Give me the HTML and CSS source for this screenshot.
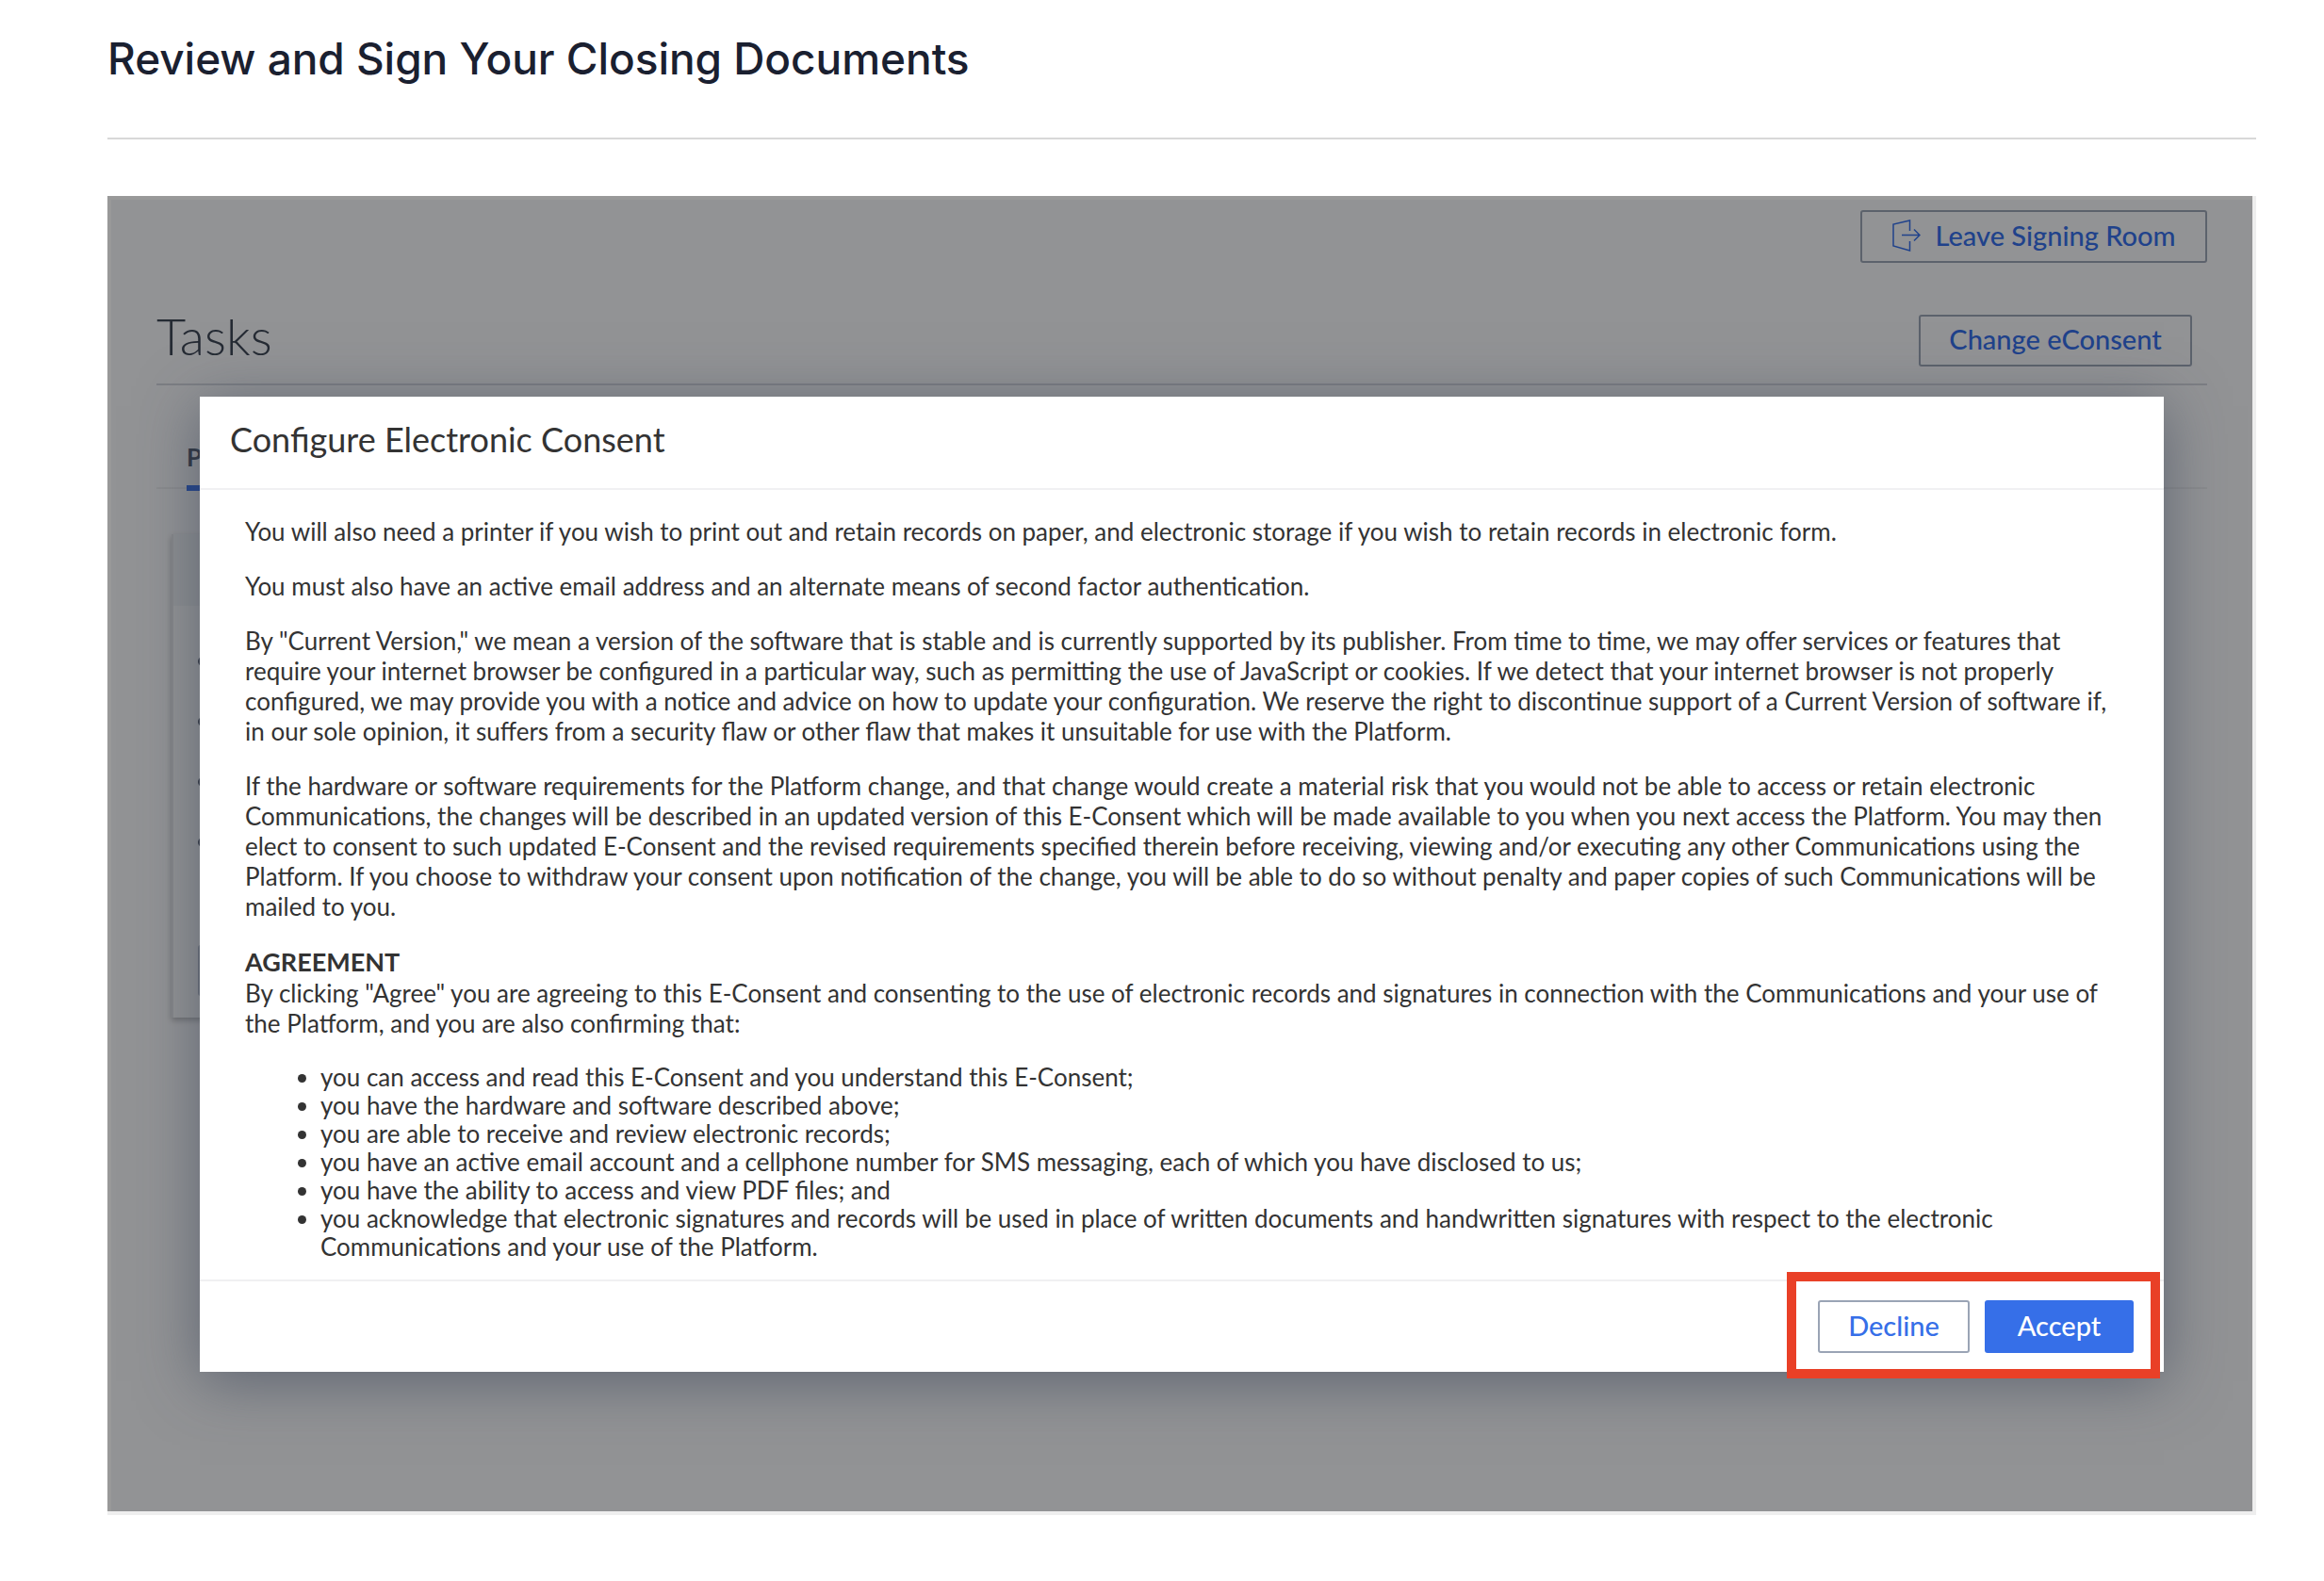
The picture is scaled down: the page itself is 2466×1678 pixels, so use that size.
FILE: index.html
```html
<!DOCTYPE html>
<html lang="en">
<head>
  <meta charset="UTF-8">
  <title>Review and Sign Your Closing Documents</title>
  <link rel="stylesheet" href="styles.css">
</head>
<body>
  <header class="page-header">
    <h1>Review and Sign Your Closing Documents</h1>
  </header>

  <div class="frame">
    <div class="room">
      <div class="room-actions">
        <a class="btn btn-outline btn-leave">
          <svg class="leave-icon" viewBox="0 0 30 34" width="30" height="34" fill="none" stroke="currentColor" stroke-width="1.5">
            <path d="M18.5 12V1L1 5v23l17.5 5V23"/>
            <path d="M10 16.5h19M23 10.500l6 6-6 6"/>
          </svg>
          Leave Signing Room
        </a>
      </div>
      <div class="tasks-head">
        <h2>Tasks</h2>
        <a class="btn btn-outline btn-econsent">Change eConsent</a>
      </div>
      <div class="tabs"><span class="tab">P</span></div>
      <div class="task-card">
        <div class="task-card-head"></div>
        <ul class="task-list">
          <li></li>
          <li></li>
          <li></li>
          <li></li>
        </ul>
        <div class="task-card-btn"></div>
      </div>
    </div>

    <div class="overlay"></div>

    <div class="modal">
      <div class="modal-head">Configure Electronic Consent</div>
      <div class="modal-body">
        <p>You will also need a printer if you wish to print out and retain records on paper, and electronic storage if you wish to retain records in electronic form.</p>
        <p>You must also have an active email address and an alternate means of second factor authentication.</p>
        <p>By "Current Version," we mean a version of the software that is stable and is currently supported by its publisher. From time to time, we may offer services or features that require your internet browser be configured in a particular way, such as permitting the use of JavaScript or cookies. If we detect that your internet browser is not properly configured, we may provide you with a notice and advice on how to update your configuration. We reserve the right to discontinue support of a Current Version of software if, in our sole opinion, it suffers from a security flaw or other flaw that makes it unsuitable for use with the Platform.</p>
        <p>If the hardware or software requirements for the Platform change, and that change would create a material risk that you would not be able to access or retain electronic Communications, the changes will be described in an updated version of this E-Consent which will be made available to you when you next access the Platform. You may then elect to consent to such updated E-Consent and the revised requirements specified therein before receiving, viewing and/or executing any other Communications using the Platform. If you choose to withdraw your consent upon notification of the change, you will be able to do so without penalty and paper copies of such Communications will be mailed to you.</p>
        <h3>AGREEMENT</h3>
        <p>By clicking "Agree" you are agreeing to this E-Consent and consenting to the use of electronic records and signatures in connection with the Communications and your use of the Platform, and you are also confirming that:</p>
        <ul>
          <li>you can access and read this E-Consent and you understand this E-Consent;</li>
          <li>you have the hardware and software described above;</li>
          <li>you are able to receive and review electronic records;</li>
          <li>you have an active email account and a cellphone number for SMS messaging, each of which you have disclosed to us;</li>
          <li>you have the ability to access and view PDF files; and</li>
          <li>you acknowledge that electronic signatures and records will be used in place of written documents and handwritten signatures with respect to the electronic Communications and your use of the Platform.</li>
        </ul>
      </div>
      <div class="modal-foot">
        <a class="btn btn-decline">Decline</a>
        <a class="btn btn-accept">Accept</a>
      </div>
    </div>

    <div class="highlight"></div>
  </div>
</body>
</html>
```

FILE: styles.css
```css
:root {
  --blue: #366fe8;
  --text: #333;
  --title: #1a2030;
}

* {
  box-sizing: border-box;
  margin: 0;
  padding: 0;
}

body {
  font-family: Lato, "Open Sans", sans-serif;
  color: var(--text);
  background-color: white;
  padding: 0 72px 0 114px;
}

.page-header {
  height: 148px;
  border-bottom: 2px solid #d8d8d8;
  padding-top: 32px;
}

h1 {
  font-family: Inter, sans-serif;
  font-size: 46px;
  line-height: 60px;
  font-weight: 500;
  letter-spacing: -0.05px;
  color: var(--title);
}

.frame {
  position: relative;
  margin-top: 60px;
  height: 1400px;
  border-right: 4px solid #eee;
  border-bottom: 4px solid #eee;
  overflow: hidden;
}

.room {
  height: 100%;
  padding: 11px 48px 0 48px;
  background-color: #f4f5f8;
  border-top: 4px solid white;
  border-left: 4px solid white;
}

.room-actions {
  display: flex;
  justify-content: flex-end;
}

.btn {
  display: flex;
  align-items: center;
  justify-content: center;
  padding-bottom: 3px;
  font-size: 29px;
  font-weight: 500;
  border-radius: 3px;
}

.btn-outline {
  height: 55px;
  border: 2px solid #9aa4b5;
  color: var(--blue);
}

.btn-leave {
  width: 368px;
  height: 56px;
  gap: 16px;
}

.leave-icon {
  flex: none;
}

.tasks-head {
  display: flex;
  justify-content: space-between;
  align-items: center;
  margin-top: 55px;
  padding: 0 16px 18px 0;
  border-bottom: 2px solid #cfd3da;
}

.btn-econsent {
  width: 290px;
  padding-bottom: 5px;
}

h2 {
  font-size: 54px;
  font-weight: 300;
  line-height: 55px;
  color: #3f4858;
  margin-top: -10px;
}

.tabs {
  height: 110px;
  padding: 60px 0 0 32px;
  border-bottom: 2px solid #e6e8eb;
}

.tab {
  display: inline-block;
  width: 40px;
  height: 52px;
  font-size: 26px;
  font-weight: 700;
  color: #4a5568;
  border-bottom: 6px solid var(--blue);
}

.task-card {
  position: relative;
  width: 1500px;
  height: 513px;
  margin: 48px 0 0 16px;
  border-left: 2px solid #dfe2e7;
  background-color: #f6f7f9;
  box-shadow: 0 3px 6px rgba(0, 0, 0, 0.25);
}

.task-card-head {
  height: 76px;
  background-color: #eceef2;
}

.task-list {
  list-style: none;
  margin: 54px 0 0 26px;
  display: flex;
  flex-direction: column;
  gap: 54px;
}

.task-list li {
  width: 10px;
  height: 10px;
  border-radius: 50%;
  background-color: #555e6e;
}

.task-card-btn {
  width: 80px;
  height: 54px;
  margin: 104px 0 0 26px;
  border-radius: 3px;
  background-color: #b9c0cc;
}

.overlay {
  position: absolute;
  inset: 0;
  background-color: rgba(0, 0, 0, 0.4);
}

.modal {
  position: absolute;
  left: 98px;
  top: 213px;
  width: 2084px;
  height: 1035px;
  background-color: white;
  box-shadow: 0 10px 60px rgba(60, 70, 90, 0.6);
  display: flex;
  flex-direction: column;
}

.modal-head {
  height: 99px;
  padding: 23px 32px 0;
  font-size: 36px;
  line-height: 44px;
  border-bottom: 2px solid #f0f0f2;
  color: #333;
}

.modal-body {
  flex: 1;
  padding: 28px 48px 0;
  font-size: 26px;
  line-height: 32px;
}

.modal-body p {
  margin-bottom: 26px;
}

.modal-body h3 {
  font-size: 27px;
  font-weight: 700;
  line-height: 34px;
}

.modal-body ul {
  padding-left: 80px;
  line-height: 30px;
}

.modal-foot {
  height: 98px;
  border-top: 2px solid #f0f0f2;
  padding-right: 32px;
  display: flex;
  justify-content: flex-end;
  align-items: center;
  gap: 16px;
}

.btn-decline {
  width: 161px;
  height: 56px;
  border: 2px solid #9aa4b5;
  color: var(--blue);
}

.btn-accept {
  width: 158px;
  height: 56px;
  background-color: var(--blue);
  color: white;
}

.highlight {
  position: absolute;
  left: 1782px;
  top: 1142px;
  width: 396px;
  height: 113px;
  border: 10px solid #e94027;
}
```
